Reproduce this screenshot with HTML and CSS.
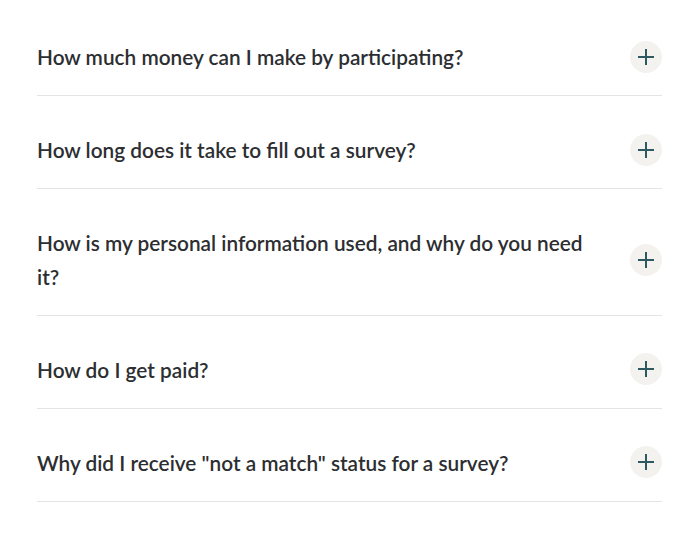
FILE: index.html
```
<!DOCTYPE html>
<html lang="en">
<head>
<meta charset="utf-8">
<title>FAQ</title>
<link rel="stylesheet" href="styles.css">
</head>
<body>
<div class="faq">
  <div class="faq-item">
    <div class="faq-question">How much money can I make by participating?</div>
    <button class="faq-toggle" aria-label="Expand"><svg viewBox="0 0 18 18" width="18" height="18"><path d="M9 1v16M1 9h16"/></svg></button>
  </div>
  <div class="faq-item">
    <div class="faq-question">How long does it take to fill out a survey?</div>
    <button class="faq-toggle" aria-label="Expand"><svg viewBox="0 0 18 18" width="18" height="18"><path d="M9 1v16M1 9h16"/></svg></button>
  </div>
  <div class="faq-item">
    <div class="faq-question">How is my personal information used, and why do you need it?</div>
    <button class="faq-toggle" aria-label="Expand"><svg viewBox="0 0 18 18" width="18" height="18"><path d="M9 1v16M1 9h16"/></svg></button>
  </div>
  <div class="faq-item">
    <div class="faq-question">How do I get paid?</div>
    <button class="faq-toggle" aria-label="Expand"><svg viewBox="0 0 18 18" width="18" height="18"><path d="M9 1v16M1 9h16"/></svg></button>
  </div>
  <div class="faq-item">
    <div class="faq-question">Why did I receive "not a match" status for a survey?</div>
    <button class="faq-toggle" aria-label="Expand"><svg viewBox="0 0 18 18" width="18" height="18"><path d="M9 1v16M1 9h16"/></svg></button>
  </div>
</div>
</body>
</html>
```
FILE: styles.css
```
html, body {
  margin: 0;
  padding: 0;
  background: #ffffff;
}
body {
  font-family: Lato, "Open Sans", sans-serif;
  color: #2c2e31;
}
.faq {
  width: 625px;
  padding: 3px 0 0 37px;
}
.faq-item {
  display: flex;
  align-items: center;
  gap: 40px;
  padding: 37px 0 21.5px;
  border-bottom: 1px solid #e4e4e4;
}
.faq-question {
  flex: 1;
  font-size: 20.8px;
  font-weight: 600;
  line-height: 33.5px;
}
.faq-toggle {
  flex: none;
  width: 32px;
  height: 32px;
  border: none;
  border-radius: 50%;
  background: #f3f2ef;
  padding: 0;
  display: flex;
  align-items: center;
  justify-content: center;
  cursor: pointer;
}
.faq-toggle svg {
  stroke: #2b5a63;
  stroke-width: 2;
  fill: none;
}
```
